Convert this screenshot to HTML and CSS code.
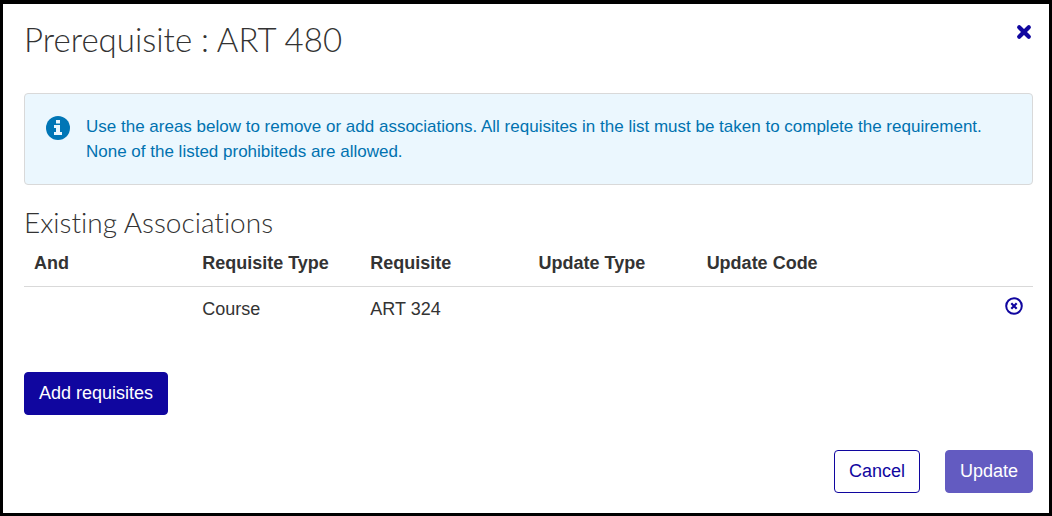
FILE: index.html
```html
<!DOCTYPE html>
<html lang="en">
<head>
  <meta charset="UTF-8">
  <meta name="viewport" content="width=device-width, initial-scale=1">
  <title>Prerequisite : ART 480</title>
  <link rel="stylesheet" href="styles.css">
</head>
<body>

  <main class="dialog">
    <header class="dialog-header">
      <h1>Prerequisite : ART 480</h1>
      <button type="button" class="icon-btn" aria-label="Close">
        <svg width="16" height="16" viewBox="0 0 16 16"><path d="M3.2 3.2l9.6 9.6M12.8 3.2L3.2 12.8" fill="none" stroke="currentColor" stroke-width="4.2" stroke-linecap="round"/></svg>
      </button>
    </header>

    <div class="alert">
      <svg class="alert-icon" width="24" height="24" viewBox="0 0 24 24">
        <circle cx="12" cy="12" r="12" fill="#0076b6"/>
        <path d="M10 4h4v3.5h-4zM8 9h6v7h2v3H8v-3h2v-4H8z" fill="#ebf7fe"/>
      </svg>
      <p>Use the areas below to remove or add associations. All requisites in the list must be taken to complete the requirement. None of the listed prohibiteds are allowed.</p>
    </div>

    <h2>Existing Associations</h2>
    <table class="assoc">
      <thead>
        <tr>
          <th>And</th>
          <th>Requisite Type</th>
          <th>Requisite</th>
          <th>Update Type</th>
          <th>Update Code</th>
          <th></th>
        </tr>
      </thead>
      <tbody>
        <tr>
          <td></td>
          <td>Course</td>
          <td>ART 324</td>
          <td></td>
          <td></td>
          <td class="action">
            <button type="button" class="icon-btn" aria-label="Remove ART 324">
              <svg width="18" height="18" viewBox="0 0 18 18" fill="none" stroke="currentColor">
                <circle cx="9" cy="9" r="7.8" stroke-width="2"/>
                <path d="M6.3 6.3l5.4 5.4M11.7 6.3l-5.4 5.4" stroke-width="2.2"/>
              </svg>
            </button>
          </td>
        </tr>
      </tbody>
    </table>

    <button type="button" class="btn btn-primary">Add requisites</button>

    <footer class="dialog-footer">
      <button type="button" class="btn btn-outline">Cancel</button>
      <button type="button" class="btn btn-muted">Update</button>
    </footer>
  </main>

</body>
</html>
```
FILE: styles.css
```css
* {
  box-sizing: border-box;
}
body {
  margin: 0;
  font-family: "Liberation Sans", Arial, sans-serif;
  font-size: 18px;
  line-height: 25px;
  color: #333;
  background: #fff;
}
.dialog {
  min-height: 100vh;
  border: 3px solid #000;
  border-top-width: 4px;
  padding: 16px 16px 20px 21px;
}
h1, h2 {
  margin: 0;
  font-family: Lato, sans-serif;
  font-weight: 300;
  font-variant-ligatures: none;
}
h1 {
  font-size: 33px;
  line-height: 38px;
}
h2 {
  font-size: 28px;
  line-height: 34px;
  margin: 20px 0 2px;
}
.dialog-header {
  display: flex;
  justify-content: space-between;
  align-items: flex-start;
  margin-bottom: 35px;
}
.icon-btn {
  display: inline-flex;
  padding: 0;
  border: 0;
  background: none;
  color: #10069f;
  cursor: pointer;
}
.dialog-header .icon-btn {
  margin: 4px 1px;
}
.alert {
  display: flex;
  gap: 16px;
  padding: 20px 21px;
  border: 1px solid #d9d9d9;
  border-radius: 4px;
  background: #ebf7fe;
  color: #0072b0;
}
.alert p {
  margin: 0;
  font-size: 17px;
}
.alert-icon {
  flex: none;
  margin-top: 2px;
}
.assoc {
  width: 100%;
  table-layout: fixed;
  border-collapse: collapse;
  margin-bottom: 40px;
}
.assoc th, .assoc td {
  padding: 10px;
  text-align: left;
  vertical-align: top;
}
.assoc th {
  border-bottom: 1px solid #d9d9d9;
}
.assoc .action {
  text-align: right;
}
.btn {
  padding: 8px 14px;
  border: 1px solid #10069f;
  border-radius: 4px;
  font: inherit;
  cursor: pointer;
}
.btn-primary {
  background: #10069f;
  color: #fff;
}
.btn-outline {
  background: #fff;
  color: #10069f;
}
.btn-muted {
  background: #635bc1;
  border-color: #635bc1;
  color: #fff;
}
.dialog-footer {
  display: flex;
  justify-content: flex-end;
  gap: 25px;
  margin-top: 35px;
}
```
